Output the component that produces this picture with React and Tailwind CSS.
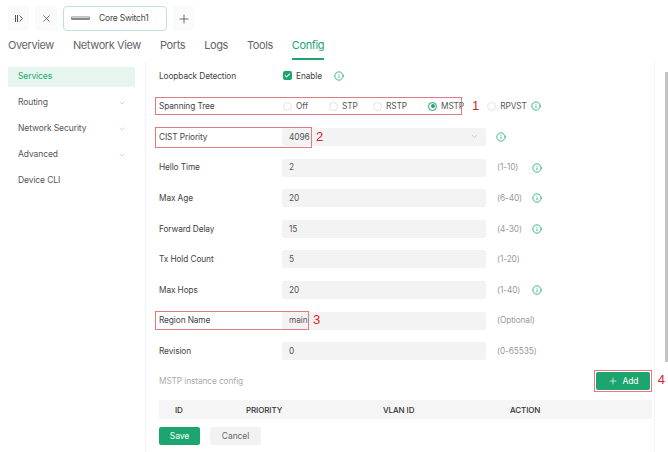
import React from 'react'
import { X, Plus, ChevronDown, Info, Check } from 'lucide-react'

const tabs = ['Overview', 'Network View', 'Ports', 'Logs', 'Tools', 'Config']

const menu = [
  { name: 'Services', active: true },
  { name: 'Routing', sub: true },
  { name: 'Network Security', sub: true },
  { name: 'Advanced', sub: true },
  { name: 'Device CLI' },
]

const fields = [
  { label: 'Hello Time', value: '2', hint: '(1-10)', info: true },
  { label: 'Max Age', value: '20', hint: '(6-40)', info: true },
  { label: 'Forward Delay', value: '15', hint: '(4-30)', info: true },
  { label: 'Tx Hold Count', value: '5', hint: '(1-20)' },
  { label: 'Max Hops', value: '20', hint: '(1-40)', info: true },
]

const InfoIcon = () => (
  <Info className="w-[10px] h-[10px] text-[#2db57f]" strokeWidth={2.2} />
)

const Mark = ({ n }) => (
  <span className="text-[13px] leading-none text-[#d8232a] font-['Liberation_Sans',sans-serif]">{n}</span>
)

const Radio = ({ label, checked }) => (
  <div className="flex items-center gap-[4px]">
    <span className={`w-[9px] h-[9px] rounded-full border flex items-center justify-center ${checked ? 'border-[#1ca56f]' : 'border-[#e3e3e3]'}`}>
      {checked && <span className="w-[4px] h-[4px] rounded-full bg-[#1ca56f]" />}
    </span>
    <span>{label}</span>
  </div>
)

const Row = ({ label, children, className = '' }) => (
  <div className={`relative flex items-center h-[30.6px] ${className}`}>
    <div className="w-[123px] shrink-0 text-[#444]">{label}</div>
    {children}
  </div>
)

const Input = ({ value }) => (
  <div className="w-[204px] h-[18px] shrink-0 rounded-[2px] bg-[#f3f3f3] px-[7px] flex items-center text-[#555]">{value}</div>
)

export default function App() {
  return (
    <div className="w-[668px] h-[452px] overflow-hidden bg-white relative font-['Inter',sans-serif] text-[#444]">
      {/* top bar */}
      <div className="flex items-center gap-[6px] pl-[8px] pt-[6px]">
        <button className="w-[21px] h-[25px] rounded-[3px] bg-[#fafafa] flex items-center justify-center">
          <svg width="10" height="9" viewBox="0 0 10 9" fill="none" stroke="#555" strokeWidth="1">
            <path d="M1.5 1v7M3.5 1v7M5.5 1.5l3 3-3 3" />
          </svg>
        </button>
        <button className="w-[22px] h-[25px] rounded-[3px] bg-[#fafafa] flex items-center justify-center">
          <X className="w-[11px] h-[11px] text-[#444]" strokeWidth={1.5} />
        </button>
        <div className="w-[104px] h-[25px] rounded-[4px] border border-[#bfe3d3] flex items-center gap-[9px] pl-[7px] text-[8.5px] text-[#444] tracking-[-0.2px]">
          <svg width="19" height="5" viewBox="0 0 19 5">
            <rect x="0" y="0.5" width="19" height="3.5" rx="1" fill="#8a8a8a" />
            <rect x="1" y="1" width="17" height="1" fill="#c9c9c9" />
          </svg>
          <span>Core Switch1</span>
        </div>
        <button className="w-[21px] h-[25px] rounded-[3px] bg-[#fafafa] flex items-center justify-center">
          <Plus className="w-[14px] h-[14px] text-[#444]" strokeWidth={1.3} />
        </button>
      </div>

      {/* tabs */}
      <div className="flex gap-[19px] pl-[8px] mt-[6px] text-[11px] tracking-[-0.4px] text-[#666]">
        {tabs.map(t => (
          <div key={t} className={`pb-[4px] border-b-2 ${t === 'Config' ? 'text-[#1ca56f] border-[#1ca56f]' : 'border-transparent'}`}>{t}</div>
        ))}
      </div>

      <div className="flex mt-[1px]">
        {/* sidebar */}
        <div className="w-[146px] shrink-0 pl-[8px] pr-[10px] pt-[6px] border-r border-[#f2f2f2] h-[400px]">
          {menu.map(m => (
            <div
              key={m.name}
              className={`h-[20px] mb-[6px] flex items-center justify-between pl-[10px] pr-[9px] text-[8.5px] tracking-[-0.1px] ${m.active ? 'bg-[#e6f6ee] text-[#22a872]' : 'text-[#555]'}`}
            >
              <span>{m.name}</span>
              {m.sub && <ChevronDown className="w-[8px] h-[8px] text-[#aaa]" strokeWidth={1.5} />}
            </div>
          ))}
        </div>

        {/* content */}
        <div className="w-[509px] shrink-0 pl-[13px] pr-[1px] text-[8.3px] tracking-[-0.1px] border-r border-[#f4f4f4]">
          <Row label="Loopback Detection">
            <div className="flex items-center gap-[4px] ml-[1px]">
              <span className="w-[9px] h-[9px] rounded-[2px] bg-[#1ca56f] flex items-center justify-center">
                <Check className="w-[7px] h-[7px] text-white" strokeWidth={3.5} />
              </span>
              <span>Enable</span>
            </div>
            <span className="ml-[12px] flex"><InfoIcon /></span>
          </Row>

          <Row label="Spanning Tree">
            <div className="flex items-center ml-[1px] text-[#555]">
              <div className="w-[46px]"><Radio label="Off" /></div>
              <div className="w-[44px]"><Radio label="STP" /></div>
              <div className="w-[55px]"><Radio label="RSTP" /></div>
              <Radio label="MSTP" checked />
            </div>
            <div className="absolute left-[-4px] top-[6px] w-[307px] h-[18px] border border-[#e27a84] pointer-events-none" />
            <span className="ml-[8px]"><Mark n="1" /></span>
            <div className="ml-[8px] text-[#555]"><Radio label="RPVST" /></div>
            <span className="ml-[4px] flex"><InfoIcon /></span>
          </Row>

          <Row label="CIST Priority">
            <div className="w-[204px] h-[18px] shrink-0 rounded-[2px] bg-[#f3f3f3] px-[7px] flex items-center justify-between text-[#555]">
              <span>4096</span>
              <ChevronDown className="w-[9px] h-[9px] text-[#aaa]" strokeWidth={1.5} />
            </div>
            <div className="absolute left-[-4px] top-[5px] w-[157px] h-[21px] border border-[#e27a84] pointer-events-none" />
            <div className="absolute left-[157px] top-[8px]"><Mark n="2" /></div>
            <span className="ml-[10px] flex"><InfoIcon /></span>
          </Row>

          {fields.map(f => (
            <Row key={f.label} label={f.label}>
              <Input value={f.value} />
              <span className="ml-[11px] w-[30px] text-[#999]">{f.hint}</span>
              {f.info && <span className="ml-[5px] flex"><InfoIcon /></span>}
            </Row>
          ))}

          <Row label="Region Name">
            <Input value="main" />
            <span className="ml-[11px] text-[#999]">(Optional)</span>
            <div className="absolute left-[-4px] top-[6px] w-[154px] h-[19px] border border-[#e27a84] pointer-events-none" />
            <div className="absolute left-[154px] top-[8px]"><Mark n="3" /></div>
          </Row>

          <Row label="Revision">
            <Input value="0" />
            <span className="ml-[11px] text-[#999]">(0-65535)</span>
          </Row>

          <div className="relative flex items-center justify-between h-[29px] pr-[1px]">
            <span className="text-[#aaa]">MSTP instance config</span>
            <div className="border border-[#e27a84] p-[1px]">
              <button className="w-[54px] h-[18px] rounded-[2px] bg-[#1ca56f] text-white flex items-center justify-center gap-[5px] text-[8.5px]">
                <Plus className="w-[10px] h-[10px]" strokeWidth={1.6} />
                Add
              </button>
            </div>
            <div className="absolute right-[-12px] top-[7px]"><Mark n="4" /></div>
          </div>

          <div className="flex items-center h-[19px] mt-[5px] bg-[#f5f5f5] text-[8px] font-medium text-[#333] mr-[1px]">
            <span className="w-[87px] pl-[16px]">ID</span>
            <span className="w-[137px]">PRIORITY</span>
            <span className="w-[127px]">VLAN ID</span>
            <span>ACTION</span>
          </div>

          <div className="flex items-center gap-[10px] mt-[8px]">
            <button className="w-[41px] h-[18px] rounded-[2px] bg-[#1ca56f] text-white text-[8.5px]">Save</button>
            <button className="w-[51px] h-[18px] rounded-[2px] bg-[#f2f2f2] text-[#666] text-[8.5px]">Cancel</button>
          </div>
        </div>
      </div>

      {/* scrollbar */}
      <div className="absolute right-0 top-[72px] w-[3px] h-[290px] bg-[#c4c4c4]" />
    </div>
  )
}
